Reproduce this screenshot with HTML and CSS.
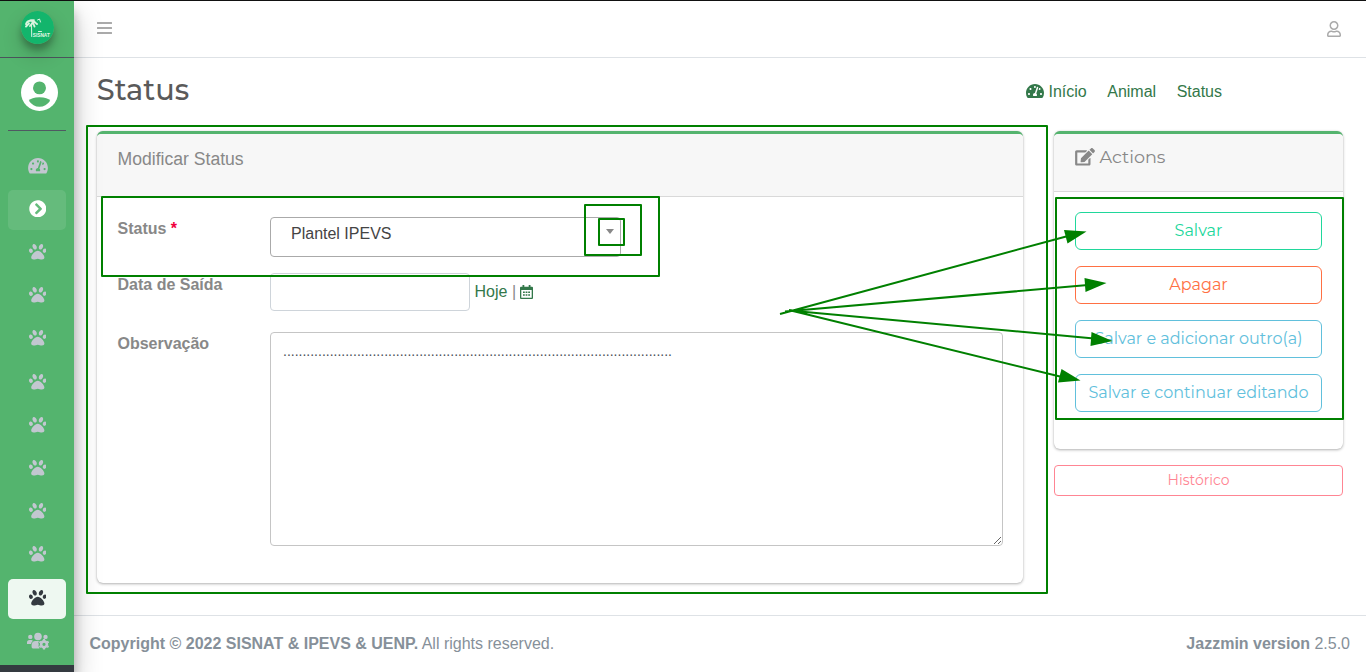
FILE: index.html
```html
<!DOCTYPE html>
<html lang="pt-br">
<head>
<meta charset="utf-8">
<title>Status</title>
<link rel="stylesheet" href="styles.css">
</head>
<body>
<svg class="defs" aria-hidden="true">
  <symbol id="paw" viewBox="0 0 512 512"><path d="M256 224c-79.41 0-192 122.76-192 200.25 0 34.9 26.81 55.75 71.74 55.75 48.84 0 81.09-25.08 120.26-25.08 39.51 0 71.85 25.08 120.26 25.08 44.93 0 71.74-20.85 71.74-55.75C448 346.76 335.41 224 256 224zm-147.28-12.61c-10.4-34.65-42.44-57.09-71.56-50.13-29.12 6.96-44.29 40.69-33.89 75.34 10.4 34.65 42.44 57.09 71.56 50.13 29.12-6.96 44.29-40.69 33.89-75.34zm84.72-20.78c30.94-8.14 42.86-50.93 26.63-95.57s-54.46-74.23-85.4-66.09-42.86 50.93-26.63 95.57 54.46 74.23 85.4 66.09zm281.39-29.34c-29.12-6.96-61.15 15.48-71.56 50.13-10.4 34.65 4.77 68.38 33.89 75.34 29.12 6.96 61.15-15.48 71.56-50.13 10.4-34.65-4.77-68.38-33.89-75.34zm-156.27 29.34c30.94 8.14 69.17-21.45 85.4-66.09 16.23-44.64 4.31-87.43-26.63-95.57s-69.17 21.45-85.4 66.09-4.31 87.43 26.63 95.57z"/></symbol>
  <symbol id="gauge" viewBox="0 0 576 512"><path d="M288 32C128.94 32 0 160.94 0 320c0 52.8 14.25 102.26 39.06 144.8 5.61 9.62 16.3 15.2 27.44 15.2h443c11.14 0 21.83-5.58 27.44-15.2C561.75 422.26 576 372.8 576 320c0-159.06-128.94-288-288-288zm0 64c14.71 0 26.58 10.13 30.32 23.65-1.11 2.26-2.64 4.23-3.45 6.67l-9.22 27.67c-5.13 3.49-10.97 6.01-17.64 6.01-17.67 0-32-14.33-32-32S270.33 96 288 96zM96 384c-17.67 0-32-14.33-32-32s14.33-32 32-32 32 14.33 32 32-14.33 32-32 32zm48-160c-17.67 0-32-14.33-32-32s14.33-32 32-32 32 14.33 32 32-14.33 32-32 32zm246.77-72.41l-61.33 184C343.13 347.33 352 364.54 352 384c0 11.72-3.38 22.55-8.88 32H232.88c-5.5-9.45-8.88-20.28-8.88-32 0-33.94 26.5-61.43 59.9-63.59l61.34-184.01c4.17-12.56 17.73-19.45 30.36-15.17 12.57 4.19 19.35 17.79 15.17 30.36zm14.66 57.2l15.52-46.55c3.47-1.29 7.13-2.23 11.05-2.23 17.67 0 32 14.33 32 32s-14.33 32-32 32c-11.38-.01-20.89-6.28-26.57-15.22zM480 384c-17.67 0-32-14.33-32-32s14.33-32 32-32 32 14.33 32 32-14.33 32-32 32z"/></symbol>
</svg>

<div class="app">
  <aside class="sidebar">
    <div class="brand">
      <svg class="logo" viewBox="0 0 33 33">
        <circle cx="16.500" cy="16.500" r="16.500" fill="#13b56c"/>
        <g fill="none" stroke="#d9f3de" stroke-linecap="round">
          <path d="M10.500 12 L10.700 25.500" stroke-width="1"/>
          <path d="M5 13 Q7 8 14 9.500 M6 11.500 Q10 7.500 16 13 M5 15.500 L8 12.500 M9 15 L12 11.500 L13.500 15.500" stroke-width="1.900" stroke-dasharray="2.500 1"/>
          <path d="M16.500 9 L18.500 8 L19.500 11 M17.500 20.500 h3" stroke-width="1"/>
        </g>
        <text x="11.800" y="25.800" class="logo-text" textLength="17" lengthAdjust="spacingAndGlyphs">SISNAT</text>
      </svg>
    </div>
    <div class="user-panel">
      <svg class="avatar" viewBox="0 0 40 40"><circle cx="20" cy="20" r="20" fill="#fff"/><circle cx="20" cy="15" r="7" fill="#54b46e"/><path d="M8.500 29 Q11 25 20 25 T31.500 29 Q27 35.500 20 35.500 T8.500 29z" fill="#54b46e"/></svg>
    </div>
    <nav class="nav">
      <a class="nav-item"><svg class="nav-gauge"><use href="#gauge"/></svg></a>
      <a class="nav-item open"><svg class="nav-icon" viewBox="0 0 512 512"><path d="M256 8c137 0 248 111 248 248S393 504 256 504 8 393 8 256 119 8 256 8zm113.900 231L234.400 103.500c-9.400-9.400-24.600-9.400-33.900 0l-17 17c-9.400 9.400-9.400 24.600 0 33.900L285.100 256 183.500 357.600c-9.400 9.400-9.400 24.600 0 33.900l17 17c9.400 9.400 24.600 9.400 33.900 0L369.900 273c9.400-9.400 9.400-24.600 0-34z"/></svg></a>
      <a class="nav-item"><svg class="nav-icon"><use href="#paw"/></svg></a>
      <a class="nav-item"><svg class="nav-icon"><use href="#paw"/></svg></a>
      <a class="nav-item"><svg class="nav-icon"><use href="#paw"/></svg></a>
      <a class="nav-item"><svg class="nav-icon"><use href="#paw"/></svg></a>
      <a class="nav-item"><svg class="nav-icon"><use href="#paw"/></svg></a>
      <a class="nav-item"><svg class="nav-icon"><use href="#paw"/></svg></a>
      <a class="nav-item"><svg class="nav-icon"><use href="#paw"/></svg></a>
      <a class="nav-item"><svg class="nav-icon"><use href="#paw"/></svg></a>
      <a class="nav-item active"><svg class="nav-icon"><use href="#paw"/></svg></a>
      <a class="nav-item"><svg class="nav-users" viewBox="0 0 22 18"><circle cx="3.300" cy="4.900" r="2.200"/><circle cx="18.500" cy="4.900" r="2.200"/><circle cx="11" cy="4.500" r="3.800"/><path d="M0 12V10.500Q0 8 2.500 8H4.500L6 8.800Q4.300 10 4 12zM4.500 14Q4.500 9 8.500 9H12Q10.800 10.500 11.800 12.300Q10.800 14.500 12.500 16.500H6Q4.500 16.500 4.500 14z"/><circle cx="17" cy="12.300" r="2.900" fill="none" stroke="currentColor" stroke-width="2.600"/><path d="M17 7v1.600M17 16v1.600M12.400 9.600l1.400 .8M20.200 14.200l1.400 .8M12.400 15l1.400-.8M20.200 10.400l1.400-.8" stroke="currentColor" stroke-width="2.200"/></svg></a>
    </nav>
  </aside>

  <div class="main">
    <header class="topbar">
      <svg class="bars" viewBox="0 0 15 13"><path d="M.7 1h13.600M.7 6h13.600M.7 11h13.600" stroke="currentColor" stroke-width="2" stroke-linecap="round"/></svg>
      <svg class="user" viewBox="0 0 448 512"><path d="M313.600 304c-28.700 0-42.500 16-89.600 16-47.100 0-60.800-16-89.600-16C60.200 304 0 364.200 0 438.400V464c0 26.500 21.500 48 48 48h352c26.500 0 48-21.500 48-48v-25.600c0-74.200-60.200-134.400-134.400-134.400zM400 464H48v-25.600c0-47.600 38.800-86.400 86.400-86.400 14.600 0 38.300 16 89.600 16 51.700 0 74.900-16 89.600-16 47.600 0 86.400 38.800 86.400 86.400V464zM224 288c79.500 0 144-64.500 144-144S303.500 0 224 0 80 64.500 80 144s64.500 144 144 144zm0-240c52.900 0 96 43.100 96 96s-43.100 96-96 96-96-43.100-96-96 43.100-96 96-96z"/></svg>
    </header>

    <div class="page-head">
      <h1>Status</h1>
      <nav class="crumbs">
        <a><svg class="crumb-icon"><use href="#gauge"/></svg>Início</a><a>Animal</a><a>Status</a>
      </nav>
    </div>

    <div class="content">
      <section class="card form-card">
        <div class="card-head">Modificar Status</div>
        <div class="form">
          <label>Status <span class="req">*</span></label>
          <div class="select"><span>Plantel IPEVS</span><i class="caret"></i></div>
          <label>Data de Saída</label>
          <div class="date-row"><div class="date"></div><span class="today">Hoje</span><span class="bar">|</span>
            <svg class="calendar" viewBox="0 0 13 14"><path fill-rule="evenodd" d="M2.500 0h1.800v1.700h4.400V0h1.800v1.700H12q1 0 1 1V13q0 1-1 1H1q-1 0-1-1V2.700q0-1 1-1h1.500zM1.300 5v7.700h10.400V5z"/><path d="M3 7.300h7M3 10h7" fill="none" stroke="currentColor" stroke-width="1.400" stroke-dasharray="1.800 .8"/></svg>
          </div>
          <label>Observação</label>
          <textarea>....................................................................................................</textarea>
        </div>
      </section>

      <div class="side">
        <section class="card actions">
          <div class="card-head actions-head"><svg class="edit" viewBox="0 0 576 512"><path d="M402.600 83.200l90.200 90.200c3.800 3.800 3.800 10 0 13.800L274.400 405.600l-92.800 10.300c-12.400 1.400-22.900-9.100-21.500-21.500l10.300-92.800L388.800 83.200c3.800-3.800 10-3.800 13.800 0zm162-22.900l-48.800-48.800c-15.200-15.200-39.900-15.200-55.200 0l-35.400 35.400c-3.800 3.800-3.800 10 0 13.800l90.200 90.200c3.800 3.800 10 3.800 13.800 0l35.400-35.400c15.200-15.300 15.200-40 0-55.200zM384 346.200V448H64V128h229.800c3.200 0 6.200-1.300 8.500-3.500l40-40c7.600-7.600 2.200-20.500-8.500-20.500H48C21.500 64 0 85.500 0 112v352c0 26.500 21.500 48 48 48h352c26.500 0 48-21.500 48-48V306.200c0-10.700-12.900-16-20.500-8.500l-40 40c-2.200 2.300-3.500 5.300-3.500 8.500z"/></svg><span>Actions</span></div>
          <div class="buttons">
            <button class="btn save">Salvar</button>
            <button class="btn delete">Apagar</button>
            <button class="btn info">Salvar e adicionar outro(a)</button>
            <button class="btn info">Salvar e continuar editando</button>
          </div>
        </section>
        <button class="btn history">Histórico</button>
      </div>
    </div>

    <footer class="footer">
      <span><b>Copyright © 2022 SISNAT &amp; IPEVS &amp; UENP.</b> All rights reserved.</span>
      <span><b>Jazzmin version</b> 2.5.0</span>
    </footer>
  </div>
</div>

<svg class="annotations" width="1366" height="672" viewBox="0 0 1366 672">
  <g fill="none" stroke="#008000" stroke-width="2" stroke-linejoin="round">
    <rect x="87" y="126" width="960" height="467"/>
    <rect x="102" y="197" width="557" height="79"/>
    <rect x="585" y="205" width="56" height="50"/>
    <rect x="599" y="219" width="25" height="26"/>
    <rect x="1056" y="198" width="287" height="221"/>
    <path d="M780 314L1068 236M785 311.500L1088 285M789 310L800 311.500L1094 338.500M793 311L1062 377"/>
  </g>
  <g fill="#008000">
    <path d="M1086.500 231.500L1064 230L1067.500 243.500z"/>
    <path d="M1106.500 283L1084.500 278L1085.500 292z"/>
    <path d="M1112.500 341L1091.500 332L1090.500 346z"/>
    <path d="M1080.500 380.500L1061.500 369L1058 382.500z"/>
  </g>
</svg>
</body>
</html>
```

FILE: styles.css
```css
* { box-sizing: border-box; }
body {
  margin: 0;
  width: 1366px;
  height: 672px;
  overflow: hidden;
  background: #fff;
  color: #888;
  font: 16px/24px "Liberation Sans", Arial, sans-serif;
}
svg { fill: currentColor; flex-shrink: 0; }
.defs { position: absolute; width: 0; height: 0; }
.app { display: flex; height: 672px; border-top: 1px solid #111; }

.sidebar {
  width: 74px;
  flex-shrink: 0;
  background: #54b46e;
  border-bottom: 7px solid #343a40;
  box-shadow: 0 14px 28px rgba(0,0,0,.25), 0 10px 10px rgba(0,0,0,.22);
  z-index: 1;
}
.brand { height: 57px; padding: 10px 0 0 21px; border-bottom: 1px solid #4b545c; }
.logo { display: block; width: 33px; height: 33px; border-radius: 50%; box-shadow: 0 10px 20px rgba(0,0,0,.19), 0 6px 6px rgba(0,0,0,.23); }
.logo-text { font: bold 5.5px "Liberation Sans", sans-serif; fill: #e4f7e6; }
.user-panel { height: 73px; margin: 0 8px; padding: 16px 0 0 13px; border-bottom: 1px solid #4f5962; }
.avatar { display: block; width: 37px; height: 37px; }
.nav { display: flex; flex-direction: column; gap: 3.2px; padding: 16px 8px 0; }
.nav-item { display: flex; height: 40px; align-items: center; justify-content: center; border-radius: 5px; color: #c2c7d0; padding: 0 0 3px 1px; }
.open { background: rgba(255,255,255,.1); color: #fff; }
.active { background: rgba(255,255,255,.9); color: #343a40; }
.nav-icon { width: 17.6px; height: 17.6px; }
.nav-gauge { width: 20px; height: 17.6px; }
.nav-users { width: 22px; height: 18px; }

.main { flex: 1; min-width: 0; }
.topbar { height: 57px; border-bottom: 1px solid #dee2e6; display: flex; justify-content: space-between; padding: 20px 25px 0 23px; color: #aaa; }
.bars { width: 15px; height: 13px; margin-top: 1px; }
.user { width: 14px; height: 16px; }
.page-head { height: 73px; display: flex; justify-content: space-between; padding: 13px 144px 0 22.8px; }
h1 { margin: 0; font: 500 28.8px/38px Montserrat, Inter, sans-serif; color: #5a5a5a; }
.crumbs { display: flex; gap: 20.5px; padding-top: 9px; color: #33784a; }
.crumbs a { display: flex; }
.crumb-icon { width: 18px; height: 16px; margin: 3px 4px 0 0; }

.content { display: flex; gap: 31px; height: 484px; padding-left: 23px; }
.card { border-radius: 6px; border-top: 3px solid #54b46e; box-shadow: 0 0 1px rgba(0,0,0,.13), 0 1px 3px rgba(0,0,0,.3); background: #fff; }
.form-card { width: 926px; height: 452px; }
.card-head { height: 63px; padding: 13px 20.5px 0; background: #f7f7f7; border-bottom: 1px solid #d9d9d9; font-size: 17.6px; border-radius: 4px 4px 0 0; }
.form { display: grid; grid-template-columns: 152.500px 733px; grid-template-rows: 56px 59px 214px; padding: 20px 20px 0 20.500px; }
label { font-weight: 700; }
.req { color: #f0003c; }
.select { width: 351px; height: 40px; border: 1px solid #aaa; border-radius: 4px; padding: 4px 6px 0 20px; color: #444; display: flex; justify-content: space-between; }
.caret { width: 0; height: 0; margin-top: 7px; border: 4px solid transparent; border-top: 5px solid #888; border-bottom: 0; }
.date-row { display: flex; color: #33784a; }
.date { width: 200px; height: 38px; border: 1px solid #ced4da; border-radius: 4px; }
.today { padding: 7px 4.5px 0; }
.bar { padding: 7px 4px 0 0; color: #888; }
.calendar { width: 13px; height: 14px; margin-top: 12px; }
textarea { width: 733px; height: 214px; border: 1px solid #c5c5c5; border-radius: 4px; padding: 6px 12px; margin: 0; font: 14px/24px "Liberation Sans", Arial, sans-serif; color: #495057; resize: both; outline: none; }

.side { width: 289px; }
.actions { height: 318px; }
.actions-head { height: 58px; padding: 11px 21px 0; display: flex; gap: 4.5px; font: 400 17.6px/24px Montserrat, Inter, sans-serif; }
.edit { width: 20px; height: 17.6px; margin-top: 3px; }
.buttons { display: grid; gap: 16px; padding: 20px 21px 0; }
.btn { display: block; width: 100%; height: 38px; margin: 0; padding: 0 0 1px; background: transparent; border: 1px solid currentColor; border-radius: 6px; font: 400 16px/24px Montserrat, Inter, sans-serif; white-space: nowrap; }
.save { color: #20d79b; }
.delete { color: #ff7043; }
.info { color: #61c0dc; }
.history { height: 31px; margin-top: 16px; border-radius: 4px; color: #ff8593; font-size: 14px; }

.footer { height: 57px; display: flex; justify-content: space-between; align-items: center; padding: 0 16px 0 15.5px; border-top: 1px solid #dee2e6; color: #869099; }
.annotations { position: absolute; left: 0; top: 0; z-index: 3; pointer-events: none; }
```
